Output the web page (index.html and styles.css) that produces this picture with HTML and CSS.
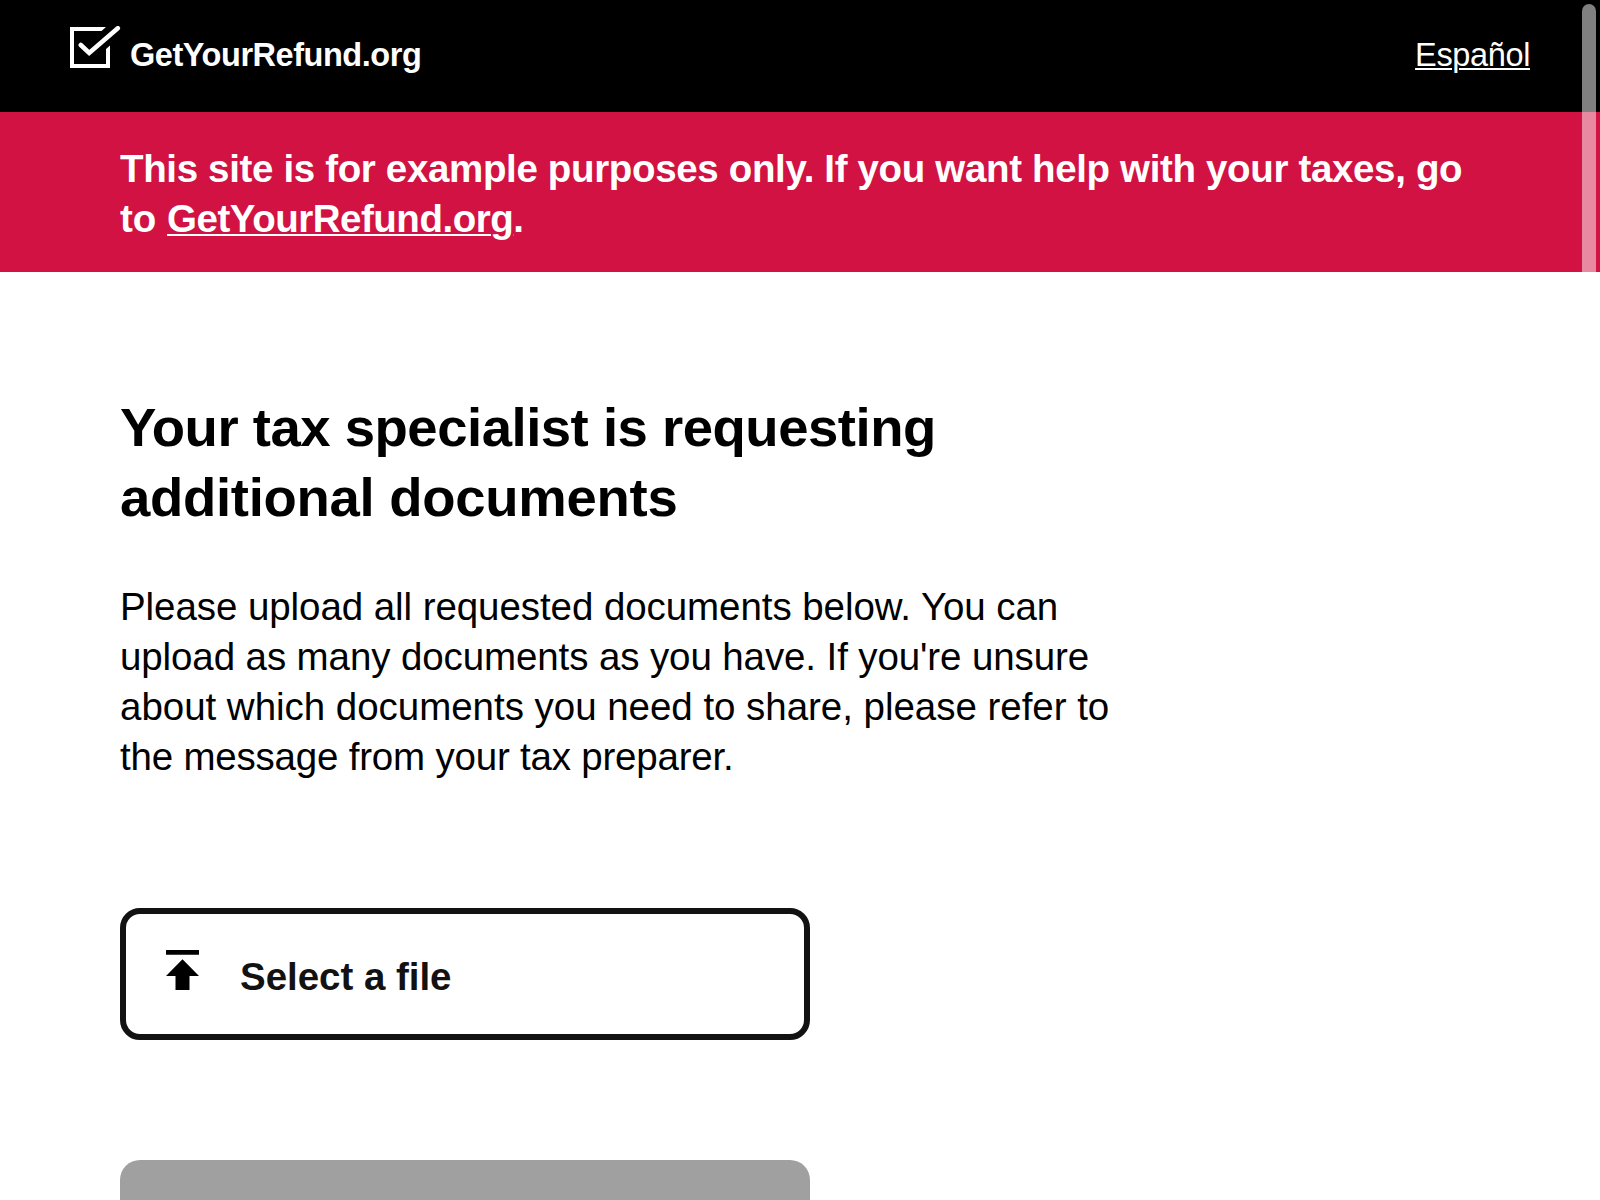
FILE: index.html
```html
<!DOCTYPE html>
<html lang="en">
<head>
<meta charset="utf-8">
<title>GetYourRefund.org</title>
<link rel="stylesheet" href="styles.css">
</head>
<body>
<header class="site-header">
  <a class="logo">
    <svg class="logo-mark" viewBox="0 0 52 44" width="52" height="44">
      <path d="M36 1H0V42H40V19.5L36 23V38H4V5H31.5Z" fill="#fff"/>
      <path d="M10.8 19L19.2 27L47.8 2.2" fill="none" stroke="#fff" stroke-width="4.6" stroke-linecap="round"/>
    </svg>
    <span class="logo-text">GetYourRefund.org</span>
  </a>
  <a class="lang" href="#">Español</a>
</header>
<div class="notice">
  <span class="line n1">This site is for example purposes only. If you want help with your taxes, go</span>
  <span class="line n2">to <a class="notice-link" href="#">GetYourRefund.org</a>.</span>
</div>
<main class="content">
  <h1 class="title"><span class="line t1">Your tax specialist is requesting</span> <span class="line t2">additional documents</span></h1>
  <p class="copy"><span class="line p1">Please upload all requested documents below. You can</span>
    <span class="line p2">upload as many documents as you have. If you're unsure</span>
    <span class="line p3">about which documents you need to share, please refer to</span>
    <span class="line p4">the message from your tax preparer.</span></p>
  <button class="file-button">
    <svg class="upload-icon" viewBox="0 0 33 40" width="33" height="40"><path d="M0 0H33V4.7H0ZM16.5 9.3L33 26H23.5V40H9.5V26H0Z"/></svg>
    <span class="file-label">Select a file</span>
  </button>
  <div class="continue"></div>
</main>
<div class="scroll-thumb"></div>
</body>
</html>
```
FILE: styles.css
```css
* { box-sizing: border-box; }
html { height: 100%; overflow: hidden; }
body {
  margin: 0;
  height: 1200px;
  overflow: hidden;
  background: #fff;
  color: #000;
  font: 38.5px/50px "Liberation Sans", Arial, sans-serif;
}
.line { display: block; white-space: nowrap; }
.n1 { letter-spacing: -.345px; }
.n2 { letter-spacing: 0; }
.t1 { letter-spacing: -.49px; }
.t2 { letter-spacing: -.29px; }
.p1 { letter-spacing: -.07px; }
.p2 { letter-spacing: -.105px; }
.p3 { letter-spacing: -.03px; }
.p4 { letter-spacing: -.2px; }
.site-header {
  display: flex;
  justify-content: space-between;
  height: 112px;
  padding: 26px 70px 0;
  background: #000;
  color: #fff;
  font-size: 32.5px;
  line-height: 58px;
}
.logo { display: flex; gap: 8px; }
.logo-text { font-weight: 700; letter-spacing: -.46px; }
.lang { color: #fff; letter-spacing: -.36px; text-underline-offset: 2px; text-decoration-thickness: 2px; }
.notice {
  height: 160px;
  padding: 32px 120px 0;
  background: #d11242;
  color: #fff;
  font-weight: 700;
}
.notice-link { color: #fff; letter-spacing: -.48px; text-decoration-thickness: 2px; text-underline-offset: 2px; }
.content { padding: 121px 120px 0; }
.title { margin: 0 0 49px; font-size: 54.5px; line-height: 70px; }
.copy { margin: 0 0 126px; }
.file-button {
  display: flex;
  width: 690px;
  height: 132px;
  padding: 36px 40px 0;
  gap: 41px;
  border: 6px solid #121212;
  border-radius: 20px;
  background: #fff;
  color: #121212;
  font: inherit;
  font-weight: 700;
}
.file-label { padding-top: 2px; letter-spacing: -.03px; }
.upload-icon { fill: #000; }
.continue {
  width: 690px;
  height: 40px;
  margin-top: 120px;
  border-radius: 20px 20px 0 0;
  background: #a0a0a0;
}
.scroll-thumb {
  position: absolute;
  top: 4px;
  left: 1582px;
  width: 14px;
  height: 300px;
  border-radius: 7px;
  background: rgba(255, 255, 255, .5);
}
```
